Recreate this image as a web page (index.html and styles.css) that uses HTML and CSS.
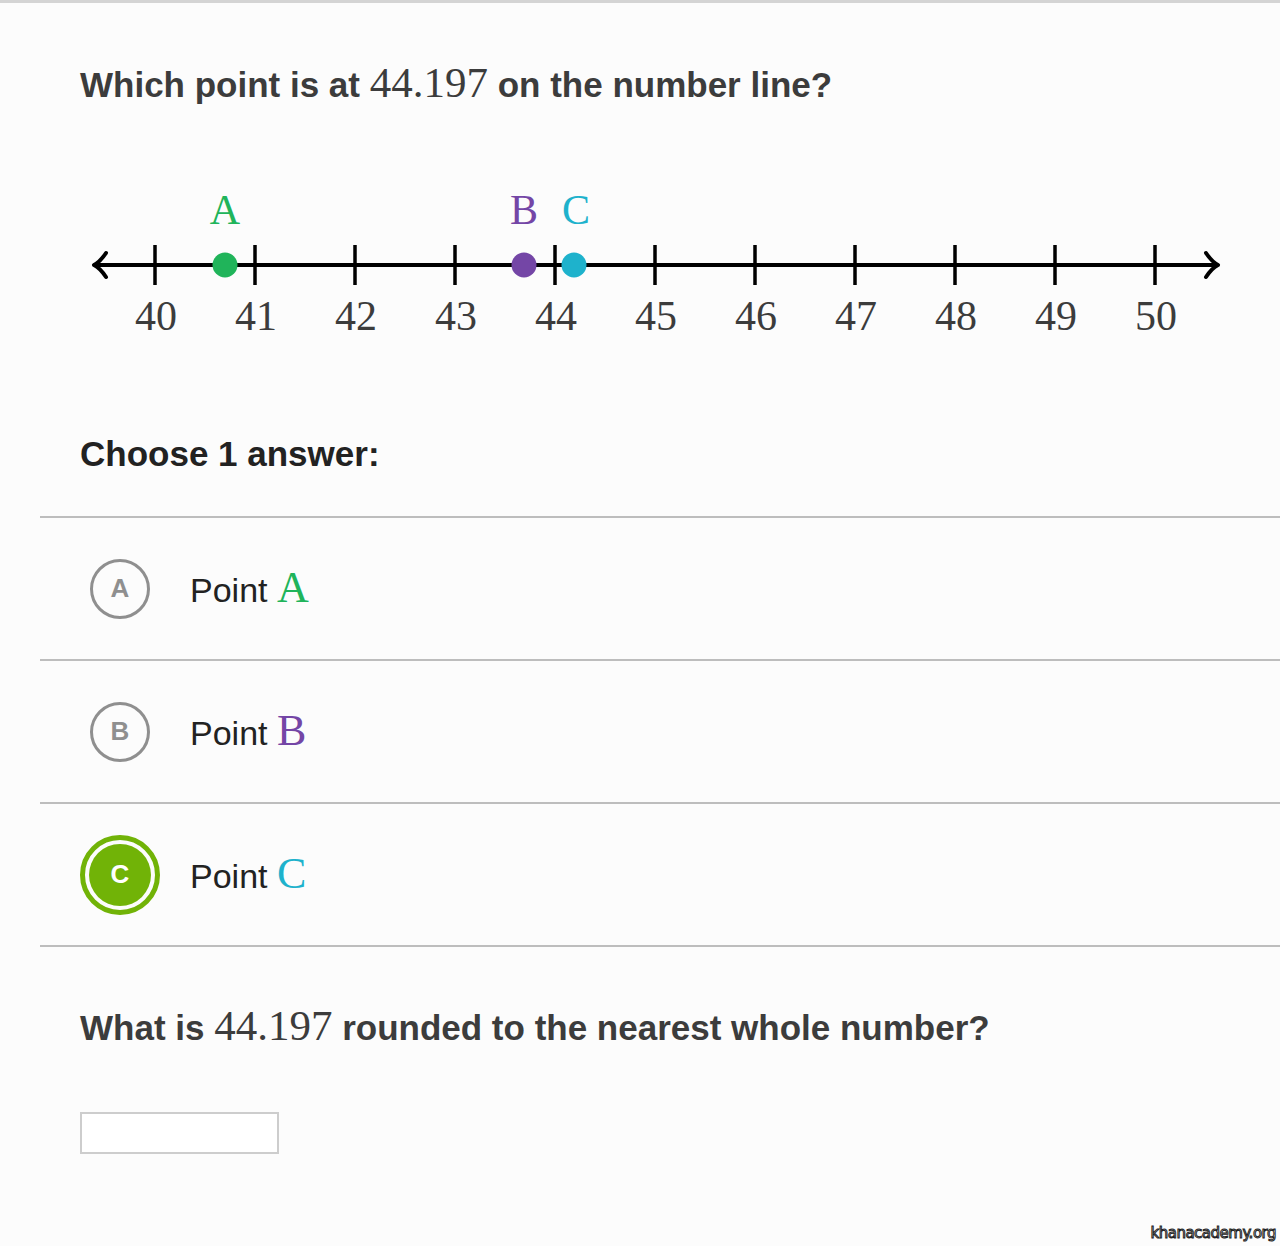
FILE: index.html
```html
<!DOCTYPE html>
<html>
<head>
<meta charset="utf-8">
<link rel="stylesheet" href="styles.css">
</head>
<body>
<div class="page">
  <h2 class="question q1">Which point is at <span class="math">44.197</span> on the number line?</h2>
  <svg class="numberline" width="1280" height="170" viewBox="0 180 1280 170">
    <g stroke="#000" stroke-width="4" fill="none" stroke-linecap="round" stroke-linejoin="round">
      <line x1="95" y1="264" x2="1216" y2="264"/>
      <path d="M106 252 Q100 261 94 264 Q100 267 106 276"/>
      <path d="M1206 252 Q1212 261 1218 264 Q1212 267 1206 276"/>
    </g>
    <g stroke="#000" stroke-width="3.5">
      <line x1="155" y1="244" x2="155" y2="284"/>
      <line x1="255" y1="244" x2="255" y2="284"/>
      <line x1="355" y1="244" x2="355" y2="284"/>
      <line x1="455" y1="244" x2="455" y2="284"/>
      <line x1="555" y1="244" x2="555" y2="284"/>
      <line x1="655" y1="244" x2="655" y2="284"/>
      <line x1="755" y1="244" x2="755" y2="284"/>
      <line x1="855" y1="244" x2="855" y2="284"/>
      <line x1="955" y1="244" x2="955" y2="284"/>
      <line x1="1055" y1="244" x2="1055" y2="284"/>
      <line x1="1155" y1="244" x2="1155" y2="284"/>
    </g>
    <circle cx="225" cy="264" r="12.5" fill="#20b45a"/>
    <circle cx="524" cy="264" r="12.5" fill="#7446a6"/>
    <circle cx="574" cy="264" r="12.5" fill="#1eb2cc"/>
    <g class="ptlabel" text-anchor="middle">
      <text x="225" y="223" fill="#20b45a">A</text>
      <text x="524" y="223" fill="#7446a6">B</text>
      <text x="576" y="223" fill="#1eb2cc">C</text>
    </g>
    <g class="ticklabel" text-anchor="middle">
      <text x="156" y="329">40</text>
      <text x="256" y="329">41</text>
      <text x="356" y="329">42</text>
      <text x="456" y="329">43</text>
      <text x="556" y="329">44</text>
      <text x="656" y="329">45</text>
      <text x="756" y="329">46</text>
      <text x="856" y="329">47</text>
      <text x="956" y="329">48</text>
      <text x="1056" y="329">49</text>
      <text x="1156" y="329">50</text>
    </g>
  </svg>
  <h3 class="choose">Choose 1 answer:</h3>
  <ul class="options">
    <li class="option">
      <span class="bubble">A</span>
      <span class="opt-text">Point <span class="var var-a">A</span></span>
    </li>
    <li class="option">
      <span class="bubble">B</span>
      <span class="opt-text">Point <span class="var var-b">B</span></span>
    </li>
    <li class="option">
      <span class="bubble selected"><span class="inner">C</span></span>
      <span class="opt-text">Point <span class="var var-c">C</span></span>
    </li>
  </ul>
  <h2 class="question q2">What is <span class="math">44.197</span> rounded to the nearest whole number?</h2>
  <div class="answer-box"></div>
  <div class="watermark">khanacademy.org</div>
</div>
</body>
</html>
```

FILE: styles.css
```css
html, body {
  margin: 0;
  padding: 0;
  background: #fcfcfc;
}
.page {
  position: relative;
  width: 1280px;
  height: 1246px;
  box-sizing: border-box;
  border-top: 3px solid #d4d4d4;
  font-family: "Liberation Sans", Arial, sans-serif;
  overflow: hidden;
}
.question {
  margin: 0;
  padding-left: 80px;
  font-size: 35px;
  font-weight: bold;
  color: #3c3c3c;
  line-height: 40px;
}
.q1 {
  padding-top: 60px;
}
.math {
  font-family: "Liberation Serif", "Times New Roman", serif;
  font-weight: normal;
  font-size: 43px;
}
.numberline {
  display: block;
  margin-top: 76px;
}
.ptlabel text {
  font-family: "Liberation Serif", serif;
  font-size: 42px;
}
.ticklabel text {
  font-family: "Liberation Serif", serif;
  font-size: 42px;
  fill: #3c3c3c;
}
.choose {
  margin: 83px 0 0;
  padding-left: 80px;
  font-size: 35px;
  font-weight: bold;
  color: #222;
  line-height: 40px;
}
.options {
  list-style: none;
  margin: 42px 0 0 40px;
  padding: 0;
  border-top: 2px solid #bdbdbd;
}
.option {
  display: flex;
  align-items: center;
  height: 141px;
  border-bottom: 2px solid #bdbdbd;
  padding-left: 40px;
}
.bubble {
  width: 54px;
  height: 54px;
  border: 3px solid #8f8f8f;
  border-radius: 50%;
  display: flex;
  align-items: center;
  justify-content: center;
  color: #8f8f8f;
  font-weight: bold;
  font-size: 26px;
  flex: none;
  margin: 0 40px 0 10px;
}
.bubble.selected {
  width: 70px;
  height: 70px;
  border: 5px solid #71b307;
  margin: 0 30px 0 0;
}
.bubble .inner {
  width: 62px;
  height: 62px;
  border-radius: 50%;
  background: #71b307;
  color: #fff;
  display: flex;
  align-items: center;
  justify-content: center;
}
.opt-text {
  font-size: 34px;
  color: #222;
  padding-bottom: 2px;
}
.var {
  font-family: "Liberation Serif", serif;
  font-size: 44px;
}
.var-a { color: #20b45a; }
.var-b { color: #7446a6; }
.var-c { color: #1eb2cc; }
.q2 {
  margin-top: 59px;
}
.answer-box {
  margin: 64px 0 0 80px;
  width: 195px;
  height: 38px;
  border: 2px solid #cdcdcd;
  background: #fff;
}
.watermark {
  position: absolute;
  right: 4px;
  bottom: 4px;
  font-family: "DejaVu Sans", sans-serif;
  font-size: 15px;
  color: #fff;
  -webkit-text-stroke: 1px #222;
  letter-spacing: -0.5px;
}
```
